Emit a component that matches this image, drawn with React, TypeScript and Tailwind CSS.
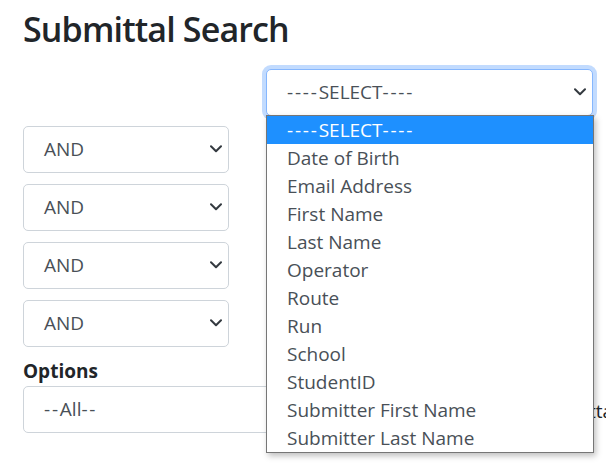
import React from "react";

const items = [
  "----SELECT----",
  "Date of Birth",
  "Email Address",
  "First Name",
  "Last Name",
  "Operator",
  "Route",
  "Run",
  "School",
  "StudentID",
  "Submitter First Name",
  "Submitter Last Name",
];

function Dashed({ text }: { text: string }) {
  // widen hyphens slightly to match the reference glyph widths
  const parts = text.split(/(-+)/).filter((p) => p.length > 0);
  return (
    <>
      {parts.map((p, i) =>
        p[0] === "-" ? (
          <span key={i} className="tracking-[1.8px]">
            {p}
          </span>
        ) : (
          <span key={i}>{p}</span>
        )
      )}
    </>
  );
}

function Chevron() {
  return (
    <svg
      className="absolute right-[6px] top-1/2 -translate-y-1/2"
      width="12"
      height="8"
      viewBox="0 0 12 8"
      fill="none"
    >
      <path
        d="M1 1.3 6 6.3 11 1.3"
        stroke="#343a40"
        strokeWidth="2"
        strokeLinecap="round"
        strokeLinejoin="round"
      />
    </svg>
  );
}

function FakeSelect({
  value,
  className,
  focus,
}: {
  value: string;
  className: string;
  focus?: boolean;
}) {
  return (
    <div
      className={
        "relative flex h-[47px] flex-none items-center rounded-[5px] border bg-white pl-[20px] text-[19px] text-[#495057] " +
        (focus
          ? "border-[#86b7fe] shadow-[0_0_0_4px_rgba(13,110,253,0.25)] "
          : "border-[#ced4da] ") +
        className
      }
    >
      <span className="leading-none">
        <Dashed text={value} />
      </span>
      <Chevron />
    </div>
  );
}

export default function App() {
  return (
    <div className="relative h-[466px] w-[606px] overflow-hidden bg-white font-['Open_Sans','Noto_Sans',sans-serif] text-[#212529]">
      <div className="flex flex-col pl-[23px] pt-[9px]">
        <h1 className="text-[34px] font-semibold leading-[1.2] tracking-[-0.85px]">
          Submittal Search
        </h1>
        <div className="mt-[19px] flex">
          <FakeSelect value="----SELECT----" className="ml-[243px] w-[327px]" focus />
        </div>
        <div className="mt-[10px] flex flex-col gap-[11px]">
          {[0, 1, 2, 3].map((i) => (
            <div key={i} className="flex gap-[37px]">
              <FakeSelect value="AND" className="w-[206px]" />
              <FakeSelect value="" className="w-[327px]" />
            </div>
          ))}
        </div>
        <label className="mt-[9px] text-[19px] font-bold leading-[30px] text-[#212529]">
          Options
        </label>
        <div className="flex items-center">
          <FakeSelect value="--All--" className="w-[540px]" />
          <span className="ml-[14px] whitespace-nowrap pt-[3px] text-[19px] text-[#212529]">
            Attachments
          </span>
        </div>
      </div>

      <div className="absolute left-[266px] top-[115px] w-[328px] border border-[#767676] bg-white shadow-[2px_3px_6px_rgba(0,0,0,0.25)]">
        {items.map((it, i) => (
          <div
            key={it}
            className={
              "flex h-[28px] items-center pl-[20px] text-[19px] leading-[28px] " +
              (i === 0 ? "bg-[#1e90ff] text-white" : "text-[#495057]")
            }
          >
            <Dashed text={it} />
          </div>
        ))}
      </div>
    </div>
  );
}
